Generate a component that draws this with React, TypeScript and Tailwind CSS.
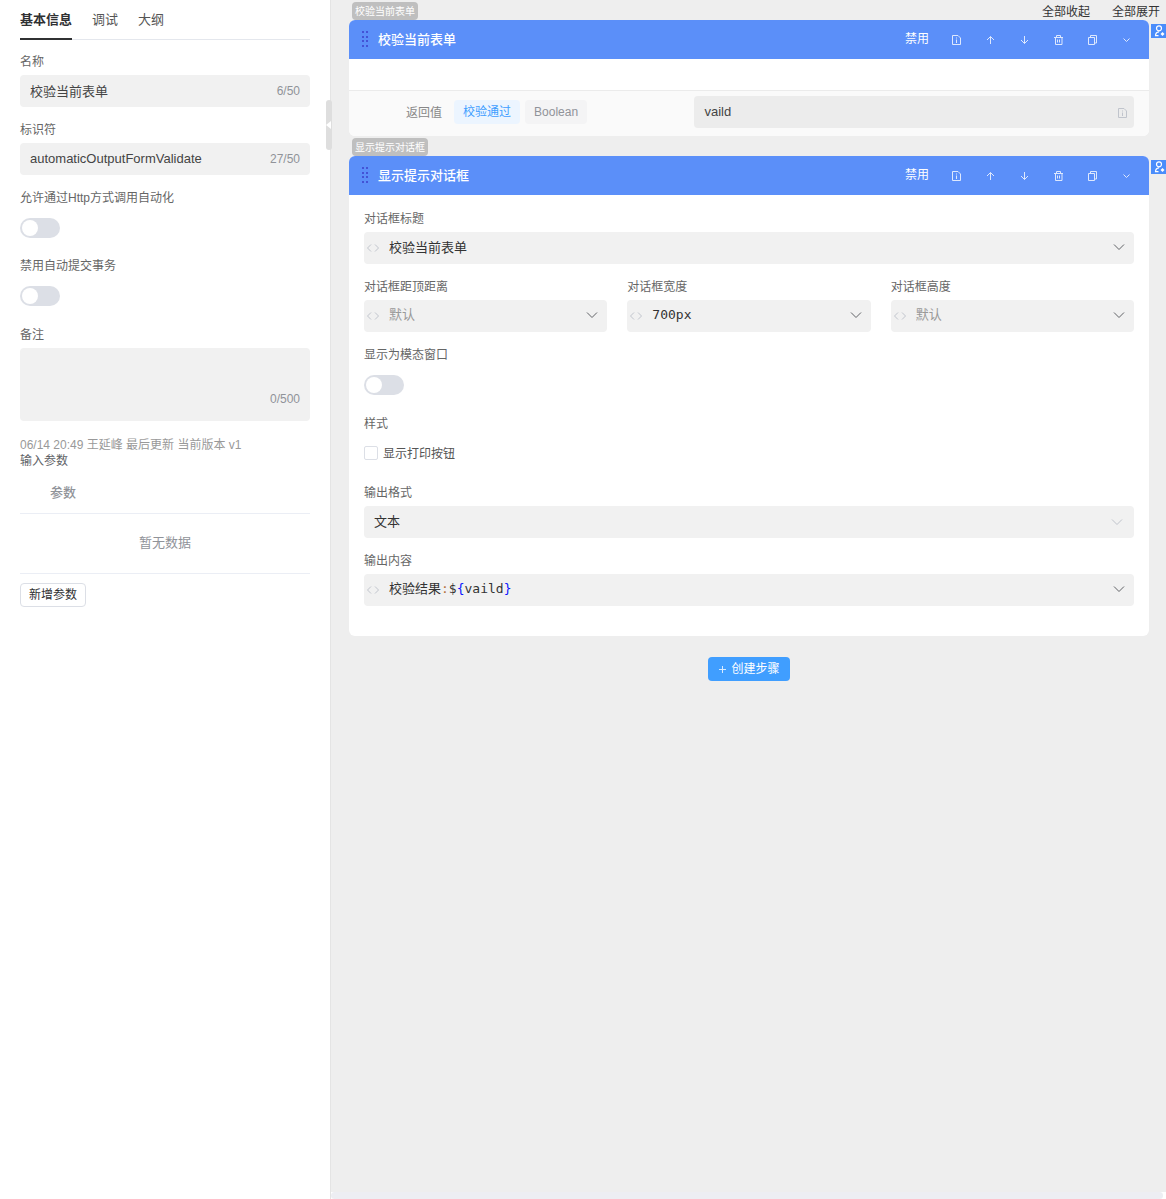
import React, { useState } from "react";

type IconProps = { className?: string };

/* ---------- icons ---------- */

const DocIcon = ({ className = "" }: IconProps) => (
  <svg className={`h-3.5 w-3.5 ${className}`} viewBox="0 0 14 14" fill="none" stroke="currentColor">
    <path d="M3.5 3.5h5.500l2.500 2.500v6.500h-8z" />
    <path d="M7.5 5.500v1M7.5 7.500v3.500" />
  </svg>
);

const UpIcon = () => (
  <svg className="h-3.5 w-3.5" viewBox="0 0 14 14" fill="none" stroke="currentColor">
    <path d="M7.5 12V4.5M4 8l3.5-3.5L11 8" />
  </svg>
);

const DownIcon = () => (
  <svg className="h-3.5 w-3.5" viewBox="0 0 14 14" fill="none" stroke="currentColor">
    <path d="M7.5 4v7.5M4 8l3.500 3.500L11 8" />
  </svg>
);

const TrashIcon = () => (
  <svg className="h-3.5 w-3.5" viewBox="0 0 14 14" fill="none" stroke="currentColor">
    <path d="M3 5.5h9M5.5 5V3.5h4V5M4.5 5.500v7h6.500v-7M6.500 7.500v3M8.500 7.500v3" />
  </svg>
);

const CopyIcon = () => (
  <svg className="h-3.5 w-3.5" viewBox="0 0 14 14" fill="none" stroke="currentColor">
    <path d="M3.5 5.5h6v7h-6zM5.5 5.500v-2h6v7.500h-2" />
  </svg>
);

const FoldIcon = () => (
  <svg className="h-3.5 w-3.5" viewBox="0 0 14 14" fill="none" stroke="currentColor">
    <path d="M4.5 6.500l3 3 3-3" />
  </svg>
);

const ChevronIcon = ({ className = "" }: IconProps) => (
  <svg className={`pointer-events-none h-3.5 w-3.5 shrink-0 ${className}`} viewBox="0 0 14 14" fill="none" stroke="currentColor">
    <path d="M2 4.5L7 9.5l5-5" />
  </svg>
);

const CodeIcon = () => (
  <svg className="h-3 w-3 shrink-0 text-[#c0c4cc]" viewBox="0 0 12 12" fill="none" stroke="currentColor">
    <path d="M4 2.5L.5 6 4 9.5M8 2.5L11.5 6 8 9.5" />
  </svg>
);

const GripIcon = () => (
  <svg className="h-4 w-1.5 shrink-0" viewBox="0 0 6 16" fill="#4353d6">
    {[0, 5, 9, 14].map((y) => (
      <React.Fragment key={y}>
        <rect x="0" y={y} width="2" height="2" />
        <rect x="4" y={y} width="2" height="2" />
      </React.Fragment>
    ))}
  </svg>
);

const UserAddIcon = () => (
  <svg className="h-3.5 w-[15px]" viewBox="0 0 15 14" fill="none" stroke="currentColor">
    <circle cx="8" cy="4.300" r="2.500" strokeWidth="1.200" />
    <path d="M8 7.800c-2.300.2-3.500 1.800-3.500 3.900h3" strokeWidth="1.200" />
    <path d="M11.500 8l2 2-2 2-2-2z" fill="currentColor" stroke="none" />
  </svg>
);

/* ---------- form pieces ---------- */

function Field({ label, id, children }: { label: string; id: string; children: React.ReactNode }) {
  return (
    <div className="min-w-0">
      <label htmlFor={id} id={`${id}-label`} className="mb-1 block h-5 text-xs leading-[22px] text-[#666]">
        {label}
      </label>
      {children}
    </div>
  );
}

function Switch({ id, className = "h-[33px]" }: { id: string; className?: string }) {
  const [on, setOn] = useState(false);
  return (
    <div className={`pt-[7px] ${className}`}>
      <input
        id={id}
        type="checkbox"
        role="switch"
        checked={on}
        onChange={() => setOn(!on)}
        className="block h-5 w-10 cursor-pointer appearance-none rounded-full bg-[#dcdfe6] p-0.5 before:block before:h-4 before:w-4 before:rounded-full before:bg-white checked:bg-[#409eff] checked:before:ml-5"
      />
    </div>
  );
}

function CountInput({ id, value, count }: { id: string; value: string; count: string }) {
  return (
    <div className="flex h-8 items-center rounded bg-[#f1f1f1] px-2.5">
      <input id={id} defaultValue={value} className="h-8 min-w-0 flex-1 bg-transparent pb-0.5 text-[13px] text-[#444] outline-none" />
      <span className="text-xs text-[#909399]">{count}</span>
    </div>
  );
}

function CodeInput({ id, value, placeholder }: { id: string; value?: string; placeholder?: string }) {
  return (
    <div className="flex h-8 items-center rounded bg-[#f1f1f1] pr-2 pl-[3px]">
      <CodeIcon />
      <input
        id={id}
        defaultValue={value}
        placeholder={placeholder}
        className="ml-2.5 h-8 min-w-0 flex-1 bg-transparent pb-1 font-['DejaVu_Sans_Mono','Noto_Sans_CJK_SC',monospace] text-[13px] text-[#333] outline-none placeholder:text-[#999]"
      />
      <ChevronIcon className="mb-0.5 text-[#606266]" />
    </div>
  );
}

/* ---------- step card ---------- */

function StepCard({ title, children }: { title: string; children: React.ReactNode }) {
  const actions = [
    { name: "备注", icon: <DocIcon /> },
    { name: "上移", icon: <UpIcon /> },
    { name: "下移", icon: <DownIcon /> },
    { name: "删除", icon: <TrashIcon /> },
    { name: "复制", icon: <CopyIcon /> },
    { name: "收起", icon: <FoldIcon /> },
  ];
  return (
    <section className="relative rounded-md bg-white">
      <header className="flex h-[39px] items-center rounded-t-md bg-[#5b8ff9] pr-4 pb-px pl-[13px] text-white">
        <GripIcon />
        <h2 className="ml-2.5 flex-1 pt-0.5 text-[13px] font-medium">{title}</h2>
        <div className="flex items-center gap-5">
          <button className="text-xs">禁用</button>
          {actions.map((a) => (
            <button key={a.name} aria-label={a.name} className="opacity-80">
              {a.icon}
            </button>
          ))}
        </div>
      </header>
      <button aria-label="添加人员" className="absolute top-1 left-full ml-0.5 h-3.5 w-[15px] bg-[#4a8dfb] text-white">
        <UserAddIcon />
      </button>
      {children}
    </section>
  );
}

function StepTag({ children }: { children: React.ReactNode }) {
  return (
    <span className="ml-[3px] h-[18px] rounded bg-[#bfbfbf] px-[3px] text-[10px] leading-[19px] text-white">{children}</span>
  );
}

/* ---------- page ---------- */

function Sidebar() {
  return (
    <aside className="relative w-[331px] shrink-0 border-r border-[#e4e4e4] bg-white px-5">
      <nav className="flex h-10 gap-5 border-b border-[#e4e7ed] text-[13px] text-[#555]">
        <button className="-mb-px border-b-2 border-[#303133] pt-0.5 font-bold text-[#303133]">基本信息</button>
        <button className="-mb-px border-b-2 border-transparent pt-0.5">调试</button>
        <button className="-mb-px border-b-2 border-transparent pt-0.5">大纲</button>
      </nav>

      <form className="mt-[11px] flex flex-col gap-3">
        <Field label="名称" id="name">
          <CountInput id="name" value="校验当前表单" count="6/50" />
        </Field>
        <Field label="标识符" id="code">
          <CountInput id="code" value="automaticOutputFormValidate" count="27/50" />
        </Field>
        <Field label="允许通过Http方式调用自动化" id="http">
          <Switch id="http" className="h-8" />
        </Field>
        <Field label="禁用自动提交事务" id="tx">
          <Switch id="tx" />
        </Field>
        <Field label="备注" id="remark">
          <div className="relative">
            <textarea id="remark" className="block h-[73px] w-full resize-none rounded bg-[#f1f1f1] px-2.5 py-1 text-[13px] outline-none" />
            <span className="absolute right-2.5 bottom-3.5 text-xs text-[#909399]">0/500</span>
          </div>
        </Field>
      </form>

      <p className="mt-4 text-xs leading-4 text-[#999]">06/14 20:49 王延峰 最后更新 当前版本 v1</p>
      <h3 className="text-xs leading-4 text-[#606266]">输入参数</h3>
      <table className="mt-[3px] w-full text-[13px] text-[#909399]">
        <thead>
          <tr className="h-[41px] border-b border-[#ebeef5]">
            <th className="pl-[30px] text-left font-medium">参数</th>
          </tr>
        </thead>
        <tbody>
          <tr className="h-[60px] border-b border-[#ebeef5]">
            <td className="text-center">暂无数据</td>
          </tr>
        </tbody>
      </table>
      <button className="mt-[9px] h-6 rounded border border-[#dcdfe6] px-2 text-xs text-[#303133]">新增参数</button>

      {/* 折叠侧栏的把手 */}
      <button aria-label="折叠侧栏" className="absolute top-[100px] -right-0.5 flex h-[50px] w-1.5 items-center rounded-sm bg-[#dedede]">
        <svg className="h-2 w-1.5" viewBox="0 0 6 8" fill="#fff">
          <path d="M5 0v8L0 4z" />
        </svg>
      </button>
    </aside>
  );
}

export default function App() {
  return (
    <div className="flex min-h-screen overflow-hidden bg-[#eeeeee] font-['Liberation_Sans','Noto_Sans_CJK_SC',sans-serif] text-[#333]">
      <Sidebar />

      <main className="flex min-w-0 flex-1 flex-col">
        <div className="flex-1 pr-[17px] pl-[18px]">
          <div className="flex h-5 items-end justify-between">
            <StepTag>校验当前表单</StepTag>
            <div className="-mr-[11px] flex h-5 gap-[22px] pt-1 text-xs leading-4">
              <button>全部收起</button>
              <button>全部展开</button>
            </div>
          </div>

          <StepCard title="校验当前表单">
            <div className="mt-[31px] flex h-[46px] rounded-b-md border-t border-[#ebebeb] bg-[#fafafa] pt-[5px] pr-[15px]">
              <div className="flex h-8 flex-1 items-center pl-[57px]">
                <label htmlFor="ret" className="mr-3 pt-0.5 text-xs text-[#888]">
                  返回值
                </label>
                <span className="mr-[5px] h-6 rounded bg-[#ecf5ff] px-[9px] text-xs leading-6 text-[#409eff]">校验通过</span>
                <span className="h-6 rounded bg-[#f4f4f5] px-[9px] text-xs leading-6 text-[#909399]">Boolean</span>
              </div>
              <div className="flex h-8 w-[56%] items-center rounded bg-[#ececec] pr-[5px] pl-2.5">
                <input id="ret" defaultValue="vaild" className="h-8 min-w-0 flex-1 bg-transparent pb-0.5 text-[13px] text-[#444] outline-none" />
                <DocIcon className="text-[#c0c4cc]" />
              </div>
            </div>
          </StepCard>

          <div className="flex h-5 items-end">
            <StepTag>显示提示对话框</StepTag>
          </div>

          <StepCard title="显示提示对话框">
            <form className="flex flex-col gap-3 px-[15px] pt-[13px] pb-[30px]">
              <Field label="对话框标题" id="title">
                <CodeInput id="title" value="校验当前表单" />
              </Field>
              <div className="grid grid-cols-3 gap-5">
                <Field label="对话框距顶距离" id="top">
                  <CodeInput id="top" placeholder="默认" />
                </Field>
                <Field label="对话框宽度" id="width">
                  <CodeInput id="width" value="700px" />
                </Field>
                <Field label="对话框高度" id="height">
                  <CodeInput id="height" placeholder="默认" />
                </Field>
              </div>
              <Field label="显示为模态窗口" id="modal">
                <Switch id="modal" />
              </Field>
              <Field label="样式" id="print">
                <div className="flex h-[33px] items-center pb-px">
                  <input
                    id="print"
                    type="checkbox"
                    className="h-3.5 w-3.5 appearance-none rounded-xs border border-[#dcdfe6] bg-white checked:bg-[#409eff]"
                  />
                  <label htmlFor="print" className="ml-[5px] pt-0.5 text-xs text-[#555]">
                    显示打印按钮
                  </label>
                </div>
              </Field>
              <Field label="输出格式" id="format">
                <div className="flex h-8 items-center rounded bg-[#f1f1f1] pr-2.5">
                  <select id="format" className="-mr-3.5 h-8 min-w-0 flex-1 appearance-none bg-transparent pl-2.5 text-[13px] outline-none">
                    <option>文本</option>
                  </select>
                  <ChevronIcon className="text-[#c0c4cc]" />
                </div>
              </Field>
              <Field label="输出内容" id="content">
                <div className="flex h-8 items-center rounded bg-[#f1f1f1] pr-2 pl-[3px]">
                  <CodeIcon />
                  <div
                    id="content"
                    role="textbox"
                    aria-labelledby="content-label"
                    contentEditable
                    suppressContentEditableWarning
                    className="ml-2.5 min-w-0 flex-1 pb-0.5 font-['DejaVu_Sans_Mono','Noto_Sans_CJK_SC',monospace] text-[13px] outline-none"
                  >
                    校验结果<span className="text-[#b5733c]">:</span>$<span className="text-[#0b16ff]">{"{"}</span>vaild
                    <span className="text-[#0b16ff]">{"}"}</span>
                  </div>
                  <ChevronIcon className="mb-0.5 text-[#606266]" />
                </div>
              </Field>
            </form>
          </StepCard>

          <div className="mt-[21px] flex justify-center">
            <button className="flex h-6 items-center gap-[5px] rounded bg-[#409eff] px-2.5 text-xs text-white">
              <svg className="h-2 w-2" viewBox="0 0 8 8" stroke="currentColor" opacity="0.8">
                <path d="M4.5 1v7M1 4.5h7" />
              </svg>
              创建步骤
            </button>
          </div>
        </div>

        {/* 底部横向滚动条 */}
        <div className="h-[7px] bg-white pr-[3px]">
          <div className="h-full rounded-sm bg-[#edeef3]" />
        </div>
      </main>
    </div>
  );
}
